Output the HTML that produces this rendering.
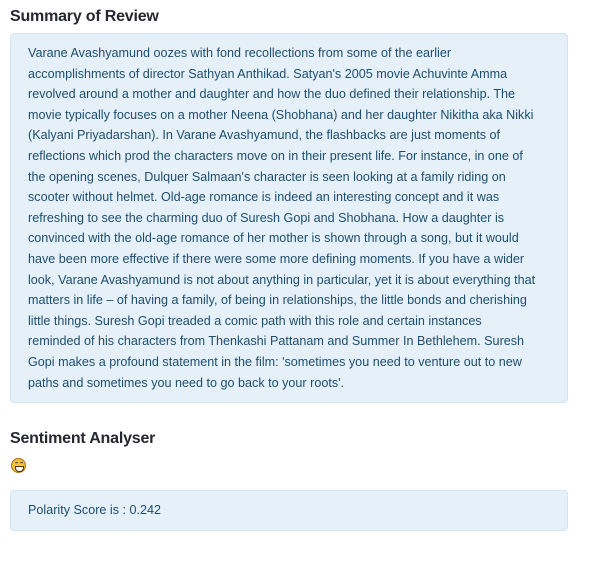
<!DOCTYPE html>
<html><head><style>
body{margin:0;background:#fff;font-family:"Liberation Sans",sans-serif;}
h2{position:absolute;left:10px;margin:0;font-size:16px;font-weight:bold;color:#262730;letter-spacing:-0.2px;}
.box{position:absolute;left:10px;width:558px;box-sizing:border-box;background:#e6f0f9;border:1px solid #d3e4f3;border-radius:4px;color:#1d4e6e;font-size:12.6px;padding:0 17px;}
.l{white-space:nowrap;height:20.6px;line-height:20.6px;}
</style></head><body>
<h2 style="top:8px">Summary of Review</h2>
<div class="box" style="top:33px;height:370px;padding-top:9px">
<div class="l">Varane Avashyamund oozes with fond recollections from some of the earlier</div>
<div class="l">accomplishments of director Sathyan Anthikad. Satyan's 2005 movie Achuvinte Amma</div>
<div class="l">revolved around a mother and daughter and how the duo defined their relationship. The</div>
<div class="l">movie typically focuses on a mother Neena (Shobhana) and her daughter Nikitha aka Nikki</div>
<div class="l">(Kalyani Priyadarshan). In Varane Avashyamund, the flashbacks are just moments of</div>
<div class="l">reflections which prod the characters move on in their present life. For instance, in one of</div>
<div class="l">the opening scenes, Dulquer Salmaan's character is seen looking at a family riding on</div>
<div class="l">scooter without helmet. Old-age romance is indeed an interesting concept and it was</div>
<div class="l">refreshing to see the charming duo of Suresh Gopi and Shobhana. How a daughter is</div>
<div class="l">convinced with the old-age romance of her mother is shown through a song, but it would</div>
<div class="l">have been more effective if there were some more defining moments. If you have a wider</div>
<div class="l">look, Varane Avashyamund is not about anything in particular, yet it is about everything that</div>
<div class="l">matters in life – of having a family, of being in relationships, the little bonds and cherishing</div>
<div class="l">little things. Suresh Gopi treaded a comic path with this role and certain instances</div>
<div class="l">reminded of his characters from Thenkashi Pattanam and Summer In Bethlehem. Suresh</div>
<div class="l">Gopi makes a profound statement in the film: 'sometimes you need to venture out to new</div>
<div class="l">paths and sometimes you need to go back to your roots'.</div>
</div>
<h2 style="top:430px">Sentiment Analyser</h2>
<div style="position:absolute;left:11px;top:458px;width:15px;height:15px;border-radius:50%;background:#f5c33b;border:1px solid #a07010;box-sizing:border-box">
<div style="position:absolute;left:3px;top:3px;width:3px;height:2px;border-top:1px solid #333;border-radius:50%"></div>
<div style="position:absolute;left:8px;top:3px;width:3px;height:2px;border-top:1px solid #333;border-radius:50%"></div>
<div style="position:absolute;left:3px;top:7px;width:7px;height:4px;background:#fff;border:1px solid #5a2a10;border-radius:0 0 4px 4px"></div>
</div>
<div class="box" style="top:490px;height:41px;line-height:39px">Polarity Score is : 0.242</div>
</body></html>
